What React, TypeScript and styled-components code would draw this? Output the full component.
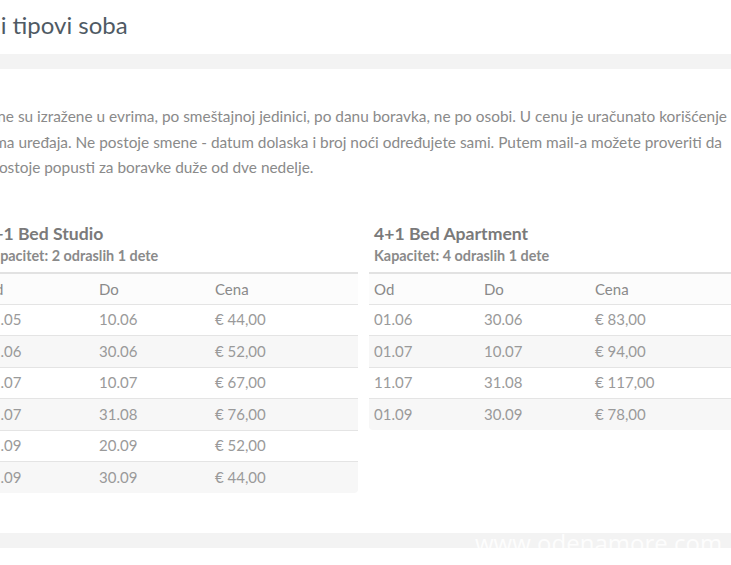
import React from "react";
import styled, { createGlobalStyle } from "styled-components";

const GlobalStyle = createGlobalStyle`
  html, body {
    margin: 0;
    padding: 0;
    background: #fff;
    overflow: hidden;
  }
  body {
    font-family: Lato, "Open Sans", sans-serif;
  }
`;

const Viewport = styled.div`
  position: relative;
  width: 731px;
  height: 565px;
  overflow: hidden;
`;

const Page = styled.div`
  margin-left: -19px;
  width: 780px;
`;

const Title = styled.h2`
  margin: 0 0 0 -41px;
  padding-top: 10px;
  font-size: 24px;
  font-weight: 400;
  line-height: 29px;
  color: #4f5a64;
  white-space: nowrap;
`;

const Band = styled.div<{ $top: number }>`
  margin-top: ${(p) => p.$top}px;
  height: 15px;
  background: #f3f3f3;
`;

const Intro = styled.p`
  margin: 35px 0 0 -2px;
  max-width: 752px;
  font-size: 15.4px;
  line-height: 25.5px;
  color: #8a8a8a;
`;

const Columns = styled.div`
  display: grid;
  grid-template-columns: 380px 380px;
  column-gap: 11px;
  align-items: start;
  margin: 43px 0 0 -3px;
`;

const RoomName = styled.h3`
  margin: 0 0 0 5px;
  font-size: 17.6px;
  font-weight: 700;
  line-height: 20px;
  color: #7a7a7a;
`;

const Capacity = styled.div`
  margin: 4px 0 8px 5px;
  font-size: 14.4px;
  font-weight: 700;
  line-height: 16px;
  color: #8a8a8a;
`;

const Table = styled.table`
  width: 100%;
  table-layout: fixed;
  border-collapse: separate;
  border-spacing: 0;
  border-top: 2px solid #e2e2e2;
  border-radius: 0 0 4px 4px;
  overflow: hidden;
  font-size: 15px;
  color: #9a9a9a;
`;

const HeadCell = styled.th<{ $w?: number }>`
  width: ${(p) => (p.$w ? `${p.$w}px` : "auto")};
  padding: 0 5px;
  height: 30px;
  text-align: left;
  font-weight: 400;
  color: #8a8a8a;
  background: #fcfcfc;
`;

const Row = styled.tr<{ $striped: boolean }>`
  background: ${(p) => (p.$striped ? "#f7f7f7" : "#fff")};
`;

const Cell = styled.td`
  padding: 0 5px;
  height: 30.5px;
  border-top: 1px solid #e4e4e4;
  line-height: 17px;
`;

const Watermark = styled.div`
  position: absolute;
  left: 475px;
  top: 526px;
  font-family: "Open Sans", sans-serif;
  font-size: 24px;
  color: rgba(255, 255, 255, 0.85);
  white-space: nowrap;
`;

type Price = { from: string; to: string; price: string };

type Room = {
  name: string;
  capacity: string;
  cols: [number, number];
  prices: Price[];
};

const rooms: Room[] = [
  {
    name: "2+1 Bed Studio",
    capacity: "Kapacitet: 2 odraslih 1 dete",
    cols: [106, 106],
    prices: [
      { from: "01.05", to: "10.06", price: "€ 44,00" },
      { from: "11.06", to: "30.06", price: "€ 52,00" },
      { from: "01.07", to: "10.07", price: "€ 67,00" },
      { from: "11.07", to: "31.08", price: "€ 76,00" },
      { from: "01.09", to: "20.09", price: "€ 52,00" },
      { from: "21.09", to: "30.09", price: "€ 44,00" },
    ],
  },
  {
    name: "4+1 Bed Apartment",
    capacity: "Kapacitet: 4 odraslih 1 dete",
    cols: [100, 101],
    prices: [
      { from: "01.06", to: "30.06", price: "€ 83,00" },
      { from: "01.07", to: "10.07", price: "€ 94,00" },
      { from: "11.07", to: "31.08", price: "€ 117,00" },
      { from: "01.09", to: "30.09", price: "€ 78,00" },
    ],
  },
];

export default function App() {
  return (
    <Viewport>
      <GlobalStyle />
      <Page>
        <Title>Cene i tipovi soba</Title>
        <Band $top={15} />

        <Intro>
          Cene su izražene u evrima, po smeštajnoj jedinici, po danu boravka, ne po
          osobi. U cenu je uračunato korišćenje klima uređaja. Ne postoje smene -
          datum dolaska i broj noći određujete sami. Putem mail-a možete proveriti da
          li postoje popusti za boravke duže od dve nedelje.
        </Intro>

        <Columns>
          {rooms.map((room) => (
            <div key={room.name}>
              <RoomName>{room.name}</RoomName>
              <Capacity>{room.capacity}</Capacity>
              <Table>
                <thead>
                  <tr>
                    <HeadCell $w={room.cols[0]}>Od</HeadCell>
                    <HeadCell $w={room.cols[1]}>Do</HeadCell>
                    <HeadCell>Cena</HeadCell>
                  </tr>
                </thead>
                <tbody>
                  {room.prices.map((p, i) => (
                    <Row key={p.from + p.to} $striped={i % 2 === 1}>
                      <Cell>{p.from}</Cell>
                      <Cell>{p.to}</Cell>
                      <Cell>{p.price}</Cell>
                    </Row>
                  ))}
                </tbody>
              </Table>
            </div>
          ))}
        </Columns>

        <Band $top={40} />
      </Page>
      <Watermark>www.odenamore.com</Watermark>
    </Viewport>
  );
}
